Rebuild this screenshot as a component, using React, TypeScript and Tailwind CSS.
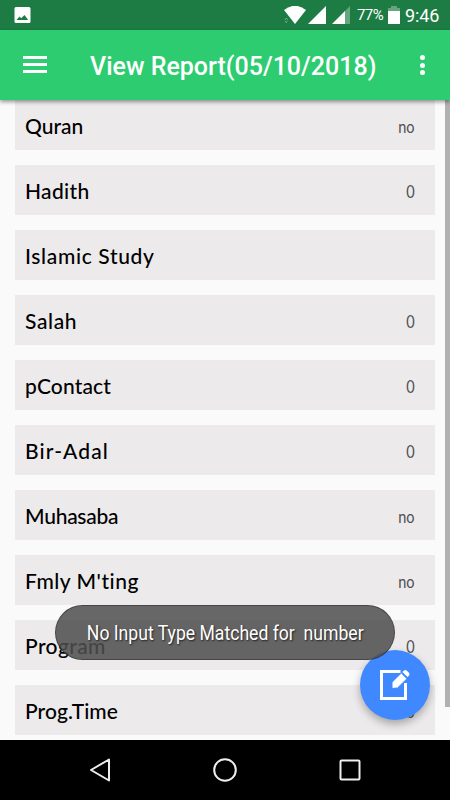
import React from "react";

type ReportItem = {
  label: string;
  value: string;
  tracking: string;
};

const items: ReportItem[] = [
  { label: "Quran", value: "no", tracking: "tracking-[0px]" },
  { label: "Hadith", value: "0", tracking: "tracking-[0.35px]" },
  { label: "Islamic Study", value: "", tracking: "tracking-[0.65px]" },
  { label: "Salah", value: "0", tracking: "tracking-[0.65px]" },
  { label: "pContact", value: "0", tracking: "tracking-[0.15px]" },
  { label: "Bir-Adal", value: "0", tracking: "tracking-[1.1px]" },
  { label: "Muhasaba", value: "no", tracking: "tracking-[-0.25px]" },
  { label: "Fmly M'ting", value: "no", tracking: "tracking-[0.5px]" },
  { label: "Program", value: "0", tracking: "tracking-[0.4px]" },
  { label: "Prog.Time", value: "0", tracking: "tracking-[0.1px]" },
];

function StatusBar() {
  return (
    <div className="flex h-[30px] items-center bg-[#1c7c44] pl-[14px] pr-[10px] text-white">
      <svg width="17" height="18" viewBox="0 0 17 18">
        <rect x="0.5" y="1" width="16" height="16" rx="1.5" fill="#fff" />
        <path d="M2.5 14 5.5 10.5 7.2 12.3 10.5 9 14.2 14Z" fill="#1c7c44" />
      </svg>
      <svg className="ml-auto" width="66" height="18" viewBox="0 0 66 18">
        <path d="M0 4Q11 -4.5 22 4L11 18Z" fill="#fff" />
        <path d="M1 14.8 2.3 16.8 3.6 14.8M1 14 2.3 12 3.6 14" fill="none" stroke="#7eb393" strokeWidth="0.8" />
        <path d="M42 0V18H24Z" fill="#fff" />
        <path d="M66 0V18H60V6Z" fill="#65a67f" />
        <path d="M61 5V18H48Z" fill="#fff" />
      </svg>
      <span className="ml-[7px] w-[27px] text-[15px] font-[450] tracking-[-0.6px]">77%</span>
      <svg className="ml-[4px]" width="12" height="18" viewBox="0 0 12 18">
        <path d="M3 0H9V2H12V6H0V2H3Z" fill="#65a67f" />
        <path d="M0 5H12V18H0Z" fill="#fff" />
      </svg>
      <span className="ml-[5px] w-[35px] whitespace-nowrap text-[18px] font-[450] tracking-[-0.1px]">9:46</span>
    </div>
  );
}

function Toolbar() {
  return (
    <header className="relative z-10 flex h-[70px] items-center bg-[#2ecc71] pl-[23px] pr-[25px] text-white shadow-[0_2px_4px_rgba(0,0,0,0.4)]">
      <button className="flex w-6 flex-col gap-1 pb-px" aria-label="Menu">
        <span className="h-[3px] w-6 bg-white" />
        <span className="h-[3px] w-6 bg-white" />
        <span className="h-[3px] w-6 bg-white" />
      </button>
      <h1 className="ml-[43px] whitespace-nowrap pt-[4px] text-[25px] font-medium leading-8">View Report(05/10/2018)</h1>
      <button className="ml-auto flex flex-col gap-[2.5px]" aria-label="More">
        <span className="size-[5px] rounded-full bg-white" />
        <span className="size-[5px] rounded-full bg-white" />
        <span className="size-[5px] rounded-full bg-white" />
      </button>
    </header>
  );
}

function ReportRow({ item }: { item: ReportItem }) {
  return (
    <li className="flex h-[50px] shrink-0 items-center justify-between bg-[#eceaeb] pl-[10px] pr-5 pt-px font-[Lato,sans-serif]">
      <span className={`text-[21px] font-medium text-black ${item.tracking}`}>{item.label}</span>
      <span className="origin-right scale-x-[0.88] pt-[3px] text-[16.5px] text-[#505050]">{item.value}</span>
    </li>
  );
}

function NavBar() {
  return (
    <nav className="flex h-[60px] items-center bg-black pl-[89px]">
      <svg width="22" height="26" viewBox="0 0 22 26" fill="none" stroke="#eee" strokeWidth="2" strokeLinejoin="round">
        <path d="M20 2.5V23.5L2 13Z" />
      </svg>
      <svg className="ml-[101px]" width="26" height="26" viewBox="0 0 26 26" fill="none" stroke="#eee" strokeWidth="2">
        <circle cx="13" cy="13" r="10.8" />
      </svg>
      <svg className="ml-[101px]" width="22" height="22" viewBox="0 0 22 22" fill="none" stroke="#eee" strokeWidth="2">
        <rect x="1.5" y="1.5" width="19" height="19" rx="1" />
      </svg>
    </nav>
  );
}

export default function App() {
  return (
    <div className="relative flex h-[800px] w-[450px] flex-col overflow-hidden bg-[#fafafa] font-[Roboto,sans-serif]">
      <StatusBar />
      <Toolbar />
      <main className="flex h-[640px] justify-between pl-[15px]">
        <ul className="flex w-[420px] flex-col gap-[15px]">
          {items.map((item) => (
            <ReportRow key={item.label} item={item} />
          ))}
        </ul>
        <div className="h-[607px] w-[5px] bg-[#b1b1b1]" />
      </main>
      <NavBar />

      <button
        className="absolute left-[360px] top-[650px] flex size-[70px] items-center justify-center rounded-full bg-[#4088ff] shadow-[0_4px_8px_rgba(0,0,0,0.3)]"
        aria-label="Edit"
      >
        <svg width="32" height="32" viewBox="0 0 32 32">
          <path d="M21.5 2.5H2.5V29.5H26.5V14" fill="none" stroke="#fff" strokeWidth="3" />
          <path d="M13 19.5V13.2L22.3 4 28 9.7 18.5 19Z" fill="#fff" stroke="#4088ff" strokeWidth="1" />
          <path d="M23.4 3 25 1.4Q26.3 0.4 27.6 1.4L30 3.8Q31 5.2 30 6.5L28.5 8Z" fill="#fff" />
        </svg>
      </button>

      <div className="absolute left-[55px] top-[605px] flex h-[55px] w-[340px] items-center justify-center rounded-full border border-black/30 bg-[#4e4e4e]/86 text-[20px] text-white">
        <span className="scale-x-[0.88] whitespace-pre [text-shadow:1px_1px_2px_rgba(0,0,0,0.7)]">
          {"No Input Type Matched for  number"}
        </span>
      </div>
    </div>
  );
}
